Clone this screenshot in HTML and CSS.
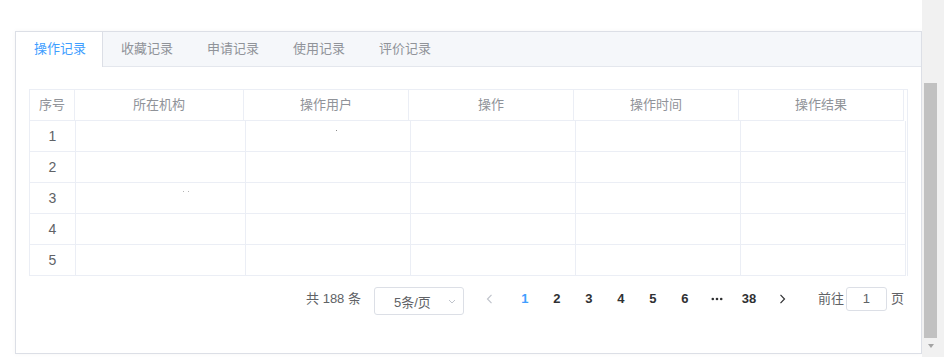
FILE: index.html
```html
<!DOCTYPE html>
<html lang="zh-CN">
<head>
<meta charset="utf-8">
<title>记录</title>
<link rel="stylesheet" href="styles.css">
</head>
<body>
<div class="page">
  <main class="main">
    <section class="card">
      <nav class="tabs">
        <div class="tab active">操作记录</div>
        <div class="tab">收藏记录</div>
        <div class="tab">申请记录</div>
        <div class="tab">使用记录</div>
        <div class="tab">评价记录</div>
      </nav>
      <div class="content">
        <div class="table">
          <div class="thead">
            <div class="th">序号</div>
            <div class="th">所在机构</div>
            <div class="th">操作用户</div>
            <div class="th">操作</div>
            <div class="th">操作时间</div>
            <div class="th">操作结果</div>
            <div class="gutter"></div>
          </div>
          <div class="tbody">
            <div class="row">
              <div class="td">1</div><div class="td"></div><div class="td"><i class="speck speck-a"></i></div><div class="td"></div><div class="td"></div><div class="td"></div><div class="pad"></div>
            </div>
            <div class="row">
              <div class="td">2</div><div class="td"></div><div class="td"></div><div class="td"></div><div class="td"></div><div class="td"></div><div class="pad"></div>
            </div>
            <div class="row">
              <div class="td">3</div><div class="td"><i class="speck speck-b"></i></div><div class="td"></div><div class="td"></div><div class="td"></div><div class="td"></div><div class="pad"></div>
            </div>
            <div class="row">
              <div class="td">4</div><div class="td"></div><div class="td"></div><div class="td"></div><div class="td"></div><div class="td"></div><div class="pad"></div>
            </div>
            <div class="row">
              <div class="td">5</div><div class="td"></div><div class="td"></div><div class="td"></div><div class="td"></div><div class="td"></div><div class="pad"></div>
            </div>
          </div>
        </div>
        <div class="pagination">
          <span class="total">共 188 条</span>
          <div class="sizes">
            <span class="sizes-text">5条/页</span>
            <svg class="sizes-arrow" width="8" height="5" viewBox="0 0 8 5"><path d="M1 1 L4 4 L7 1" fill="none" stroke="#c0c4cc" stroke-width="1"/></svg>
          </div>
          <button class="prev" type="button"><svg width="7" height="10" viewBox="0 0 7 10"><path d="M5.5 0.8 L1.5 5 L5.5 9.2" fill="none" stroke="#c0c4cc" stroke-width="1.2"/></svg></button>
          <ul class="pager">
            <li class="num active">1</li>
            <li class="num">2</li>
            <li class="num">3</li>
            <li class="num">4</li>
            <li class="num">5</li>
            <li class="num">6</li>
            <li class="num more"><svg width="12" height="4" viewBox="0 0 12 4"><circle cx="1.8" cy="2" r="1.3" fill="#303133"/><circle cx="6" cy="2" r="1.3" fill="#303133"/><circle cx="10.2" cy="2" r="1.3" fill="#303133"/></svg></li>
            <li class="num">38</li>
          </ul>
          <button class="next" type="button"><svg width="7" height="10" viewBox="0 0 7 10"><path d="M1.5 0.8 L5.5 5 L1.5 9.2" fill="none" stroke="#303133" stroke-width="1.2"/></svg></button>
          <div class="jump">
            <span>前往</span>
            <div class="jump-input">1</div>
            <span>页</span>
          </div>
        </div>
      </div>
    </section>
  </main>
  <aside class="scrollbar">
    <div class="thumb"></div>
    <div class="arrow"></div>
  </aside>
</div>
</body>
</html>
```

FILE: styles.css
```css
html, body {
  margin: 0;
  padding: 0;
  background: #fff;
  overflow: hidden;
}

body {
  font-family: "Liberation Sans", "Noto Sans CJK SC", sans-serif;
  font-size: 13px;
}

.page {
  display: flex;
  width: 944px;
  height: 357px;
}

.main {
  width: 922px;
  height: 357px;
  box-sizing: border-box;
  padding: 31px 0 0 15px;
}

.card {
  width: 907px;
  height: 323px;
  box-sizing: border-box;
  border: 1px solid #dcdfe6;
  background: #fff;
  box-shadow: 0 0 5px rgba(0, 0, 0, 0.04);
}

.tabs {
  display: flex;
  height: 35px;
  box-sizing: border-box;
  background: #f5f7fa;
  border-bottom: 1px solid #e4e7ed;
}

.tab {
  height: 35px;
  box-sizing: border-box;
  padding: 0 16px 0 18px;
  line-height: 34px;
  font-size: 13px;
  color: #909399;
  white-space: nowrap;
}

.tab.active {
  background: #fff;
  color: #409eff;
  border-right: 1px solid #dcdfe6;
}

.content {
  padding: 22px 13px 0 13px;
}

.table {
  border-top: 1px solid #ebeef5;
  border-left: 1px solid #ebeef5;
  border-right: 1px solid #ebeef5;
}

.thead {
  display: grid;
  grid-template-columns: 45px 169px 165px 165px 165px 165px 1fr;
}

.row {
  display: grid;
  grid-template-columns: 46px 170px 165px 165px 165px 165px 1fr;
}

.th,
.td {
  height: 31px;
  box-sizing: border-box;
  border-right: 1px solid #ebeef5;
  border-bottom: 1px solid #ebeef5;
  text-align: center;
  line-height: 30px;
}

.th {
  font-size: 13px;
  color: #909399;
}

.td {
  font-size: 14px;
  color: #606266;
}

.gutter,
.pad {
  height: 31px;
}

.speck {
  display: block;
  height: 1px;
}

.speck-a {
  width: 1px;
  margin: 9px 0 0 90px;
  background: #8a8a8a;
}

.speck-b {
  width: 4px;
  margin: 8px 0 0 107px;
  border-left: 1px solid #b5b5b5;
  border-right: 1px solid #b5b5b5;
}

.pagination {
  display: flex;
  justify-content: flex-end;
  align-items: flex-start;
  margin-top: 11px;
  padding-right: 4px;
  height: 28px;
  color: #606266;
  font-size: 13px;
}

.total {
  line-height: 24px;
  margin-right: 13px;
  white-space: nowrap;
}

.sizes {
  display: flex;
  align-items: center;
  width: 90px;
  height: 28px;
  box-sizing: border-box;
  border: 1px solid #dcdfe6;
  border-radius: 3px;
  padding: 1px 0 0 19px;
  margin-right: 7px;
}

.sizes-text {
  color: #606266;
  white-space: nowrap;
}

.sizes-arrow {
  display: block;
  margin-left: auto;
  margin-right: 7px;
}

.prev,
.next {
  display: flex;
  align-items: center;
  justify-content: center;
  height: 24px;
  padding: 0;
  border: 0;
  background: transparent;
}

.prev {
  width: 38px;
}

.next {
  width: 36px;
}

.prev svg,
.next svg {
  display: block;
}

.pager {
  display: flex;
  margin: 0;
  padding: 0;
  list-style: none;
}

.num {
  width: 32px;
  height: 24px;
  line-height: 24px;
  text-align: center;
  font-weight: bold;
  font-size: 13px;
  color: #303133;
}

.num.active {
  color: #409eff;
}

.num.more {
  display: flex;
  align-items: center;
  justify-content: center;
}

.num.more svg {
  display: block;
}

.jump {
  display: flex;
  align-items: center;
  margin-left: 17px;
  height: 24px;
  line-height: 24px;
  white-space: nowrap;
}

.jump-input {
  width: 41px;
  height: 24px;
  box-sizing: border-box;
  border: 1px solid #dcdfe6;
  border-radius: 3px;
  margin: 0 4px 0 2px;
  text-align: center;
  line-height: 22px;
  color: #606266;
}

.scrollbar {
  width: 22px;
  height: 357px;
  box-sizing: border-box;
  background: #f1f1f1;
  padding: 83px 0 0 2px;
  display: flex;
  flex-direction: column;
}

.thumb {
  width: 13px;
  height: 255px;
  background: #c1c1c1;
}

.arrow {
  width: 0;
  height: 0;
  margin: 6px 0 0 4px;
  border-left: 3.5px solid transparent;
  border-right: 3.5px solid transparent;
  border-top: 4px solid #a3a3a3;
}
```
